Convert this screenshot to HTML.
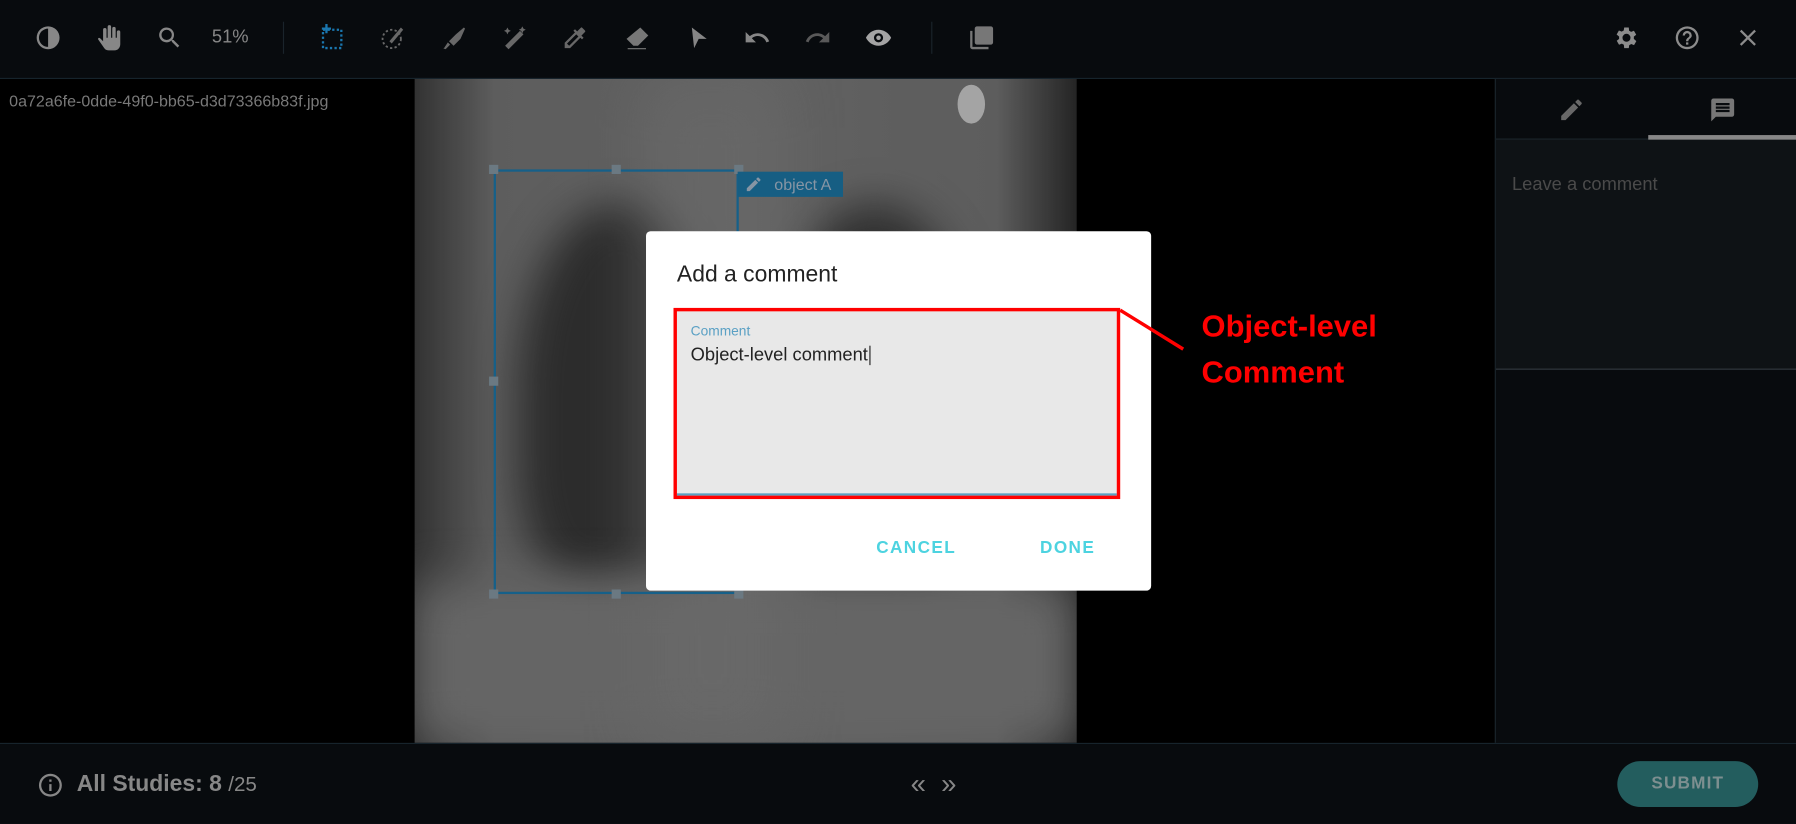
<!DOCTYPE html>
<html><head><meta charset="utf-8"><style>
html,body{margin:0;padding:0;width:1796px;height:823px;overflow:hidden;background:#000;font-family:"Liberation Sans",sans-serif}
#w{position:absolute;left:0;top:0;width:1568px;height:719px;transform:scale(1.14541,1.14464);transform-origin:0 0;background:#000}
.a{position:absolute}
.ic{position:absolute;width:24px;height:24px;fill:#9a9a9a}
</style></head><body><div id="w">
<!-- top bar -->
<div class="a" style="left:0;top:0;width:1568px;height:68px;background:#0a0d11;border-bottom:1px solid #1b2a33"></div>
<svg class="ic" style="left:30px;top:21px" viewBox="0 0 24 24"><path d="M12 2a10 10 0 100 20 10 10 0 000-20zm0 2v16a8 8 0 010-16z"/></svg>
<svg class="ic" style="left:84px;top:21px" viewBox="0 0 24 24"><path d="M21 7a1.5 1.5 0 00-3 0v5h-1V4a1.5 1.5 0 00-3 0v8h-1V2.5a1.5 1.5 0 00-3 0V12H9V5a1.5 1.5 0 00-3 0v10l-2.5-2.5c-1-1-2.5 0-1.6 1.2L7 21c1 1.5 2.5 2 4 2h5c3 0 5-2.5 5-5.5z"/></svg>
<svg class="ic" style="left:136px;top:21px" viewBox="0 0 24 24"><path d="M15.5 14h-.8l-.3-.3A6.5 6.5 0 109.5 16a6.5 6.5 0 004.2-1.6l.3.3v.8l5 5 1.5-1.5zm-6 0a4.5 4.5 0 110-9 4.5 4.5 0 010 9z"/></svg>
<div class="a" style="left:185px;top:24px;color:#9a9a9a;font-size:16px">51%</div>
<div class="a" style="left:247px;top:19px;width:1px;height:28px;background:#1e2a32"></div>
<svg class="a" style="left:279px;top:21px" width="24" height="24" viewBox="0 0 24 24"><rect x="3" y="5" width="16" height="16" fill="none" stroke="#1e88c8" stroke-width="2" stroke-dasharray="2 2"/><path d="M6 0v8M2 4h8" stroke="#1e88c8" stroke-width="2"/></svg>
<svg class="a" style="left:331px;top:21px" width="24" height="24" viewBox="0 0 24 24"><circle cx="11" cy="13" r="8" fill="none" stroke="#777" stroke-width="1.6" stroke-dasharray="2 2"/><path d="M9 15l10-12 2 2-10 12z" fill="#777"/></svg>
<svg class="ic" style="left:385px;top:21px;fill:#777" viewBox="0 0 24 24"><path d="M20 3l1 1-4 9-6 6-4-4 6-6zM6 16l2 2-4 4c-1-1-2 0-2 0z"/></svg>
<svg class="ic" style="left:437px;top:21px;fill:#777" viewBox="0 0 24 24"><path d="M7 22l-3-3L17 6l3 3zM19 2l1 2 2 1-2 1-1 2-1-2-2-1 2-1zM6 3l1 2 2 1-2 1-1 2-1-2-2-1 2-1z"/></svg>
<svg class="ic" style="left:490px;top:21px;fill:#777" viewBox="0 0 24 24"><path d="M20.7 5.6l-2.3-2.3a1 1 0 00-1.4 0l-3.1 3.1-1.9-1.9-1.4 1.4 1.4 1.4L3 16.3V21h4.7l9-9 1.4 1.4 1.4-1.4-1.9-1.9 3.1-3.1a1 1 0 000-1.4zM6.9 19L5 17.1l8.1-8.1L15 10.9z"/></svg>
<svg class="ic" style="left:544px;top:21px;fill:#888" viewBox="0 0 24 24"><path d="M15 3l7 7-9 9H9l-6-6zM4 21h16v1H4z"/></svg>
<svg class="ic" style="left:597px;top:21px;fill:#999" viewBox="0 0 24 24"><path d="M7 3l13 10h-7l-4 8z"/></svg>
<svg class="ic" style="left:649px;top:21px;fill:#999" viewBox="0 0 24 24"><path d="M12.5 8c-2.6 0-5 1-6.9 2.6L2 7v9h9l-3.6-3.6c1.4-1.2 3.2-1.9 5.1-1.9 3.5 0 6.5 2.3 7.6 5.5l2.4-.8C21 11 17.1 8 12.5 8z"/></svg>
<svg class="ic" style="left:702px;top:21px;fill:#666" viewBox="0 0 24 24"><path d="M18.4 10.6C16.6 9 14.2 8 11.5 8 6.9 8 3 11 1.5 15.2l2.4.8c1.1-3.2 4.1-5.5 7.6-5.5 2 0 3.7.7 5.1 1.9L13 16h9V7z"/></svg>
<svg class="ic" style="left:755px;top:21px;fill:#bbb" viewBox="0 0 24 24"><path d="M12 5C7 5 3 8 1 12c2 4 6 7 11 7s9-3 11-7c-2-4-6-7-11-7zm0 11a4 4 0 110-8 4 4 0 010 8zm0-6a2 2 0 100 4 2 2 0 000-4z"/></svg>
<div class="a" style="left:813px;top:19px;width:1px;height:28px;background:#1e2a32"></div>
<svg class="ic" style="left:845px;top:21px;fill:#888" viewBox="0 0 24 24"><path d="M4 6H2v14a2 2 0 002 2h14v-2H4zm16-4H8a2 2 0 00-2 2v12a2 2 0 002 2h12a2 2 0 002-2V4a2 2 0 00-2-2z"/></svg>
<svg class="ic" style="left:1408px;top:21px;fill:#a0a0a0" viewBox="0 0 24 24"><path d="M19.4 13a7.8 7.8 0 000-2l2.1-1.6-2-3.5-2.5 1a7.3 7.3 0 00-1.7-1L15 3h-4l-.4 2.6a7.3 7.3 0 00-1.7 1l-2.5-1-2 3.5L6.6 11a7.8 7.8 0 000 2l-2.1 1.6 2 3.5 2.5-1a7.3 7.3 0 001.7 1L11 21h4l.4-2.6a7.3 7.3 0 001.7-1l2.5 1 2-3.5zM13 15.5a3.5 3.5 0 110-7 3.5 3.5 0 010 7z" transform="translate(-1 0)"/></svg>
<svg class="ic" style="left:1461px;top:21px;fill:#a0a0a0" viewBox="0 0 24 24"><path d="M11 18h2v-2h-2zm1-16a10 10 0 100 20 10 10 0 000-20zm0 18a8 8 0 110-16 8 8 0 010 16zm0-14a4 4 0 00-4 4h2a2 2 0 014 0c0 2-3 1.75-3 5h2c0-2.25 3-2.5 3-5a4 4 0 00-4-4z"/></svg>
<svg class="ic" style="left:1514px;top:21px;fill:#a0a0a0" viewBox="0 0 24 24"><path d="M19 6.4L17.6 5 12 10.6 6.4 5 5 6.4 10.6 12 5 17.6 6.4 19 12 13.4 17.6 19 19 17.6 13.4 12z"/></svg>
<!-- main -->
<div class="a" style="left:8px;top:80px;color:#8a8a8a;font-size:14px">0a72a6fe-0dde-49f0-bb65-d3d73366b83f.jpg</div>
<div class="a" style="left:362px;top:69px;width:578px;height:580px;background:linear-gradient(90deg,#3a3a3a,#6a6a6a 12%,#707070 50%,#6a6a6a 88%,#2a2a2a);overflow:hidden">
 <div class="a" style="left:90px;top:110px;width:170px;height:330px;border-radius:50% 45% 20% 30%;background:#333;filter:blur(18px)"></div>
 <div class="a" style="left:320px;top:110px;width:170px;height:330px;border-radius:45% 50% 30% 20%;background:#363636;filter:blur(18px)"></div>
 <div class="a" style="left:0;top:440px;width:578px;height:140px;background:#747474;filter:blur(20px)"></div>
 <div class="a" style="left:474px;top:5px;width:24px;height:34px;border-radius:50%;background:#bbb"></div>
 <div class="a" style="left:200px;top:0;width:120px;height:580px;background:#7a7a7a;filter:blur(25px);opacity:.6"></div>
</div>
<!-- bbox -->
<div class="a" style="left:431px;top:148px;width:214px;height:371px;border:2px solid #1a6e9c;box-sizing:border-box"></div>
<div class="a" style="left:427px;top:144px;width:8px;height:8px;background:#7a8a95"></div>
<div class="a" style="left:534px;top:144px;width:8px;height:8px;background:#7a8a95"></div>
<div class="a" style="left:641px;top:144px;width:8px;height:8px;background:#7a8a95"></div>
<div class="a" style="left:427px;top:329px;width:8px;height:8px;background:#7a8a95"></div>
<div class="a" style="left:427px;top:515px;width:8px;height:8px;background:#7a8a95"></div>
<div class="a" style="left:534px;top:515px;width:8px;height:8px;background:#7a8a95"></div>
<div class="a" style="left:641px;top:515px;width:8px;height:8px;background:#7a8a95"></div>
<div class="a" style="left:644px;top:150px;width:92px;height:22px;background:#1a6c96;color:#9ab;font-size:14px;line-height:22px"><svg style="position:absolute;left:6px;top:3px" width="16" height="16" viewBox="0 0 24 24" fill="#9ab"><path d="M3 17.2V21h3.8L17.8 9.9l-3.7-3.7zM20.7 7a1 1 0 000-1.4l-2.3-2.3a1 1 0 00-1.4 0l-1.8 1.8 3.7 3.7z"/></svg><span style="position:absolute;left:32px">object A</span></div>
<!-- right panel -->
<div class="a" style="left:1305px;top:69px;width:263px;height:580px;background:#0a0d11;border-left:1px solid #1e2a32"></div>
<div class="a" style="left:1306px;top:121px;width:262px;height:200px;background:#111518;border-top:1px solid #1e2a32;border-bottom:1px solid #3a4148"></div>
<svg class="ic" style="left:1360px;top:84px;fill:#777" viewBox="0 0 24 24"><path d="M3 17.2V21h3.8L17.8 9.9l-3.7-3.7zM20.7 7a1 1 0 000-1.4l-2.3-2.3a1 1 0 00-1.4 0l-1.8 1.8 3.7 3.7z"/></svg>
<svg class="ic" style="left:1492px;top:84px;fill:#888" viewBox="0 0 24 24"><path d="M20 2H4a2 2 0 00-2 2v18l4-4h14a2 2 0 002-2V4a2 2 0 00-2-2zm-2 12H6v-2h12zm0-3H6V9h12zm0-3H6V6h12z"/></svg>
<div class="a" style="left:1439px;top:118px;width:129px;height:4px;background:#9a9a9a"></div>
<div class="a" style="left:1320px;top:153px;color:#555;font-size:16px">Leave a comment</div>
<!-- bottom -->
<div class="a" style="left:0;top:649px;width:1568px;height:70px;background:#0a0d11;border-top:1px solid #1b2a33"></div>
<svg class="ic" style="left:32px;top:674px;fill:#9a9a9a" viewBox="0 0 24 24"><path d="M11 7h2v2h-2zm0 4h2v6h-2zm1-9a10 10 0 100 20 10 10 0 000-20zm0 18a8 8 0 110-16 8 8 0 010 16z"/></svg>
<div class="a" style="left:67px;top:674px;color:#9a9a9a;font-size:20px"><b>All Studies: 8</b> <span style="font-size:18px">/25</span></div>
<div class="a" style="left:795px;top:672px;color:#9a9a9a;font-size:24px">«&nbsp;&nbsp;»</div>
<div class="a" style="left:1412px;top:665px;width:123px;height:40px;border-radius:20px;background:#286a6c;color:#8fa3a4;font-size:15px;font-weight:bold;text-align:center;line-height:40px;letter-spacing:1px">SUBMIT</div>
<!-- scrim -->
<div class="a" style="left:0;top:0;width:1568px;height:719px;background:rgba(0,0,0,0.12)"></div>
<!-- dialog -->
<div class="a" style="left:564px;top:202px;width:441px;height:314px;background:#fff;border-radius:4px"></div>
<div class="a" style="left:591px;top:229px;font-size:20px;color:#222">Add a comment</div>
<div class="a" style="left:591px;top:272px;width:384px;height:159px;background:#e8e8e8;border-bottom:2px solid #5a9fc0"></div>
<div class="a" style="left:603px;top:282px;font-size:12px;color:#5aa0c4">Comment</div>
<div class="a" style="left:603px;top:302px;font-size:16px;color:#222">Object-level comment<span style="border-left:1px solid #222;margin-left:1px"></span></div>
<div class="a" style="left:588px;top:269px;width:390px;height:167px;border:3px solid #f00;box-sizing:border-box"></div>
<svg class="a" style="left:975px;top:268px" width="70" height="45"><line x1="3" y1="3" x2="58" y2="37" stroke="#f00" stroke-width="3"/></svg>
<div class="a" style="left:1049px;top:265px;color:#f00;font-size:27px;font-weight:bold;line-height:40px">Object-level<br>Comment</div>
<div class="a" style="left:765px;top:470px;font-size:15px;color:#4dd3e0;letter-spacing:1.2px;font-weight:bold">CANCEL</div>
<div class="a" style="left:908px;top:470px;font-size:15px;color:#4dd3e0;letter-spacing:1.2px;font-weight:bold">DONE</div>
</div></body></html>
